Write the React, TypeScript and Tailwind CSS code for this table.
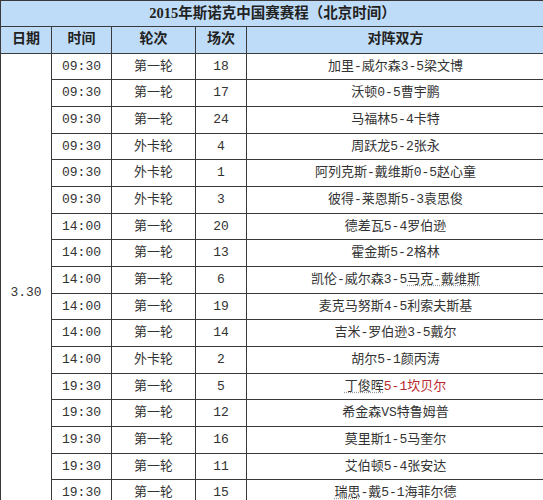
type Match = {
  time: string;
  round: string;
  no: string;
  players: React.ReactNode;
};

const dotted = "underline decoration-dotted decoration-[#999] underline-offset-2";

const matches: Match[] = [
  { time: "09:30", round: "第一轮", no: "18", players: "加里-威尔森3-5梁文博" },
  { time: "09:30", round: "第一轮", no: "17", players: "沃顿0-5曹宇鹏" },
  { time: "09:30", round: "第一轮", no: "24", players: "马福林5-4卡特" },
  { time: "09:30", round: "外卡轮", no: "4", players: "周跃龙5-2张永" },
  { time: "09:30", round: "外卡轮", no: "1", players: "阿列克斯-戴维斯0-5赵心童" },
  { time: "09:30", round: "外卡轮", no: "3", players: "彼得-莱恩斯5-3袁思俊" },
  { time: "14:00", round: "第一轮", no: "20", players: "德差瓦5-4罗伯逊" },
  { time: "14:00", round: "第一轮", no: "13", players: "霍金斯5-2格林" },
  {
    time: "14:00",
    round: "第一轮",
    no: "6",
    players: (
      <>
        凯伦-威尔森3-5<span className={dotted}>马克-戴维斯</span>
      </>
    ),
  },
  { time: "14:00", round: "第一轮", no: "19", players: "麦克马努斯4-5利索夫斯基" },
  { time: "14:00", round: "第一轮", no: "14", players: "吉米-罗伯逊3-5戴尔" },
  { time: "14:00", round: "外卡轮", no: "2", players: "胡尔5-1颜丙涛" },
  {
    time: "19:30",
    round: "第一轮",
    no: "5",
    players: (
      <>
        <span className={dotted}>丁俊晖</span>
        <span className="text-[#b8272b]">5-1坎贝尔</span>
      </>
    ),
  },
  { time: "19:30", round: "第一轮", no: "12", players: "希金森VS特鲁姆普" },
  { time: "19:30", round: "第一轮", no: "16", players: "莫里斯1-5马奎尔" },
  { time: "19:30", round: "第一轮", no: "11", players: "艾伯顿5-4张安达" },
  {
    time: "19:30",
    round: "第一轮",
    no: "15",
    players: (
      <>
        <span className={dotted}>瑞思</span>-戴5-1海菲尔德
      </>
    ),
  },
  // row below the visible area, keeps 3.30 centred like the original
  { time: "", round: "", no: "", players: "" },
];

const cell = "border border-[#3a3a3a] text-center align-middle p-0";

export default function App() {
  return (
    <div className="w-[543px] h-[500px] overflow-hidden bg-white">
      <table
        className="table-fixed border-collapse w-[545px] text-[13px] text-[#333]"
        style={{ fontFamily: '"Liberation Mono", "Noto Sans CJK SC", monospace' }}
      >
        <colgroup>
          <col className="w-[51px]" />
          <col className="w-[60px]" />
          <col className="w-[84px]" />
          <col className="w-[51px]" />
          <col />
        </colgroup>
        <thead>
          <tr className="h-[26px] bg-[#bedcf8]">
            <th
              colSpan={5}
              className={`${cell} text-[14.5px] font-bold text-[#222]`}
              style={{ fontFamily: '"Liberation Serif", "Noto Sans CJK SC", serif' }}
            >
              2015年斯诺克中国赛赛程（北京时间）
            </th>
          </tr>
          <tr className="h-[26.67px] bg-[#bedcf8] text-[14px] font-bold text-[#222]">
            <th className={cell}>日期</th>
            <th className={cell}>时间</th>
            <th className={cell}>轮次</th>
            <th className={cell}>场次</th>
            <th className={cell}>对阵双方</th>
          </tr>
        </thead>
        <tbody>
          {matches.map((m, i) => (
            <tr key={i} className="h-[26.67px]">
              {i === 0 && (
                <td rowSpan={matches.length} className={cell}>
                  3.30
                </td>
              )}
              <td className={cell}>{m.time}</td>
              <td className={cell}>{m.round}</td>
              <td className={cell}>{m.no}</td>
              <td className={cell}>{m.players}</td>
            </tr>
          ))}
        </tbody>
      </table>
    </div>
  );
}
